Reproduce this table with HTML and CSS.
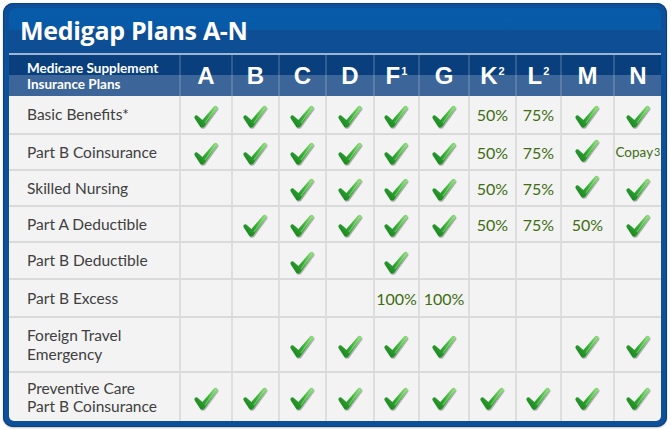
FILE: index.html
```html
<!DOCTYPE html>
<html lang="en">
<head>
<meta charset="utf-8">
<title>Medigap Plans A-N</title>
<link rel="stylesheet" href="styles.css">
</head>
<body>
<svg width="0" height="0" class="defs" aria-hidden="true">
  <defs>
    <linearGradient id="g" gradientUnits="userSpaceOnUse" x1="5" y1="21" x2="22" y2="3">
      <stop offset="0" stop-color="#1a8520"/>
      <stop offset="0.45" stop-color="#34aa36"/>
      <stop offset="1" stop-color="#84d874"/>
    </linearGradient>
    <filter id="sh" x="-20%" y="-20%" width="150%" height="150%">
      <feDropShadow dx="0.8" dy="1.2" stdDeviation="0.7" flood-color="#000" flood-opacity="0.35"/>
    </filter>
    <symbol id="chk" viewBox="0 0 26 24">
      <path filter="url(#sh)" fill="url(#g)" d="M1.6,13.6 C0.6,12.1 2.6,10.1 4.1,11.1 L9,15.4 L20.4,2.1 C21.5,0.8 24.6,2 23.5,4 L11.1,21.5 C10,23 8,23 7,21.8 Z"/>
      <path fill="#b6f0a6" opacity="0.5" d="M11,18 L21.3,3.6 C21.8,3 22.6,3.3 22.3,4 L12,18.6 Z"/>
    </symbol>
  </defs>
</svg>

<div class="frame">
  <div class="title">Medigap Plans A-N</div>
  <div class="line"></div>
  <div class="row head">
    <div class="hl"><span>Medicare Supplement</span><span>Insurance Plans</span></div>
    <div class="hc">A</div>
    <div class="hc">B</div>
    <div class="hc">C</div>
    <div class="hc">D</div>
    <div class="hc">F<sup>1</sup></div>
    <div class="hc">G</div>
    <div class="hc">K<sup>2</sup></div>
    <div class="hc">L<sup>2</sup></div>
    <div class="hc">M</div>
    <div class="hc">N</div>
  </div>
  <div class="body">
    <div class="row r1">
      <div class="lbl">Basic Benefits*</div>
      <div class="c"><svg class="ck"><use href="#chk"/></svg></div>
      <div class="c"><svg class="ck"><use href="#chk"/></svg></div>
      <div class="c"><svg class="ck"><use href="#chk"/></svg></div>
      <div class="c"><svg class="ck"><use href="#chk"/></svg></div>
      <div class="c"><svg class="ck"><use href="#chk"/></svg></div>
      <div class="c"><svg class="ck"><use href="#chk"/></svg></div>
      <div class="c pct">50%</div>
      <div class="c pct">75%</div>
      <div class="c"><svg class="ck"><use href="#chk"/></svg></div>
      <div class="c"><svg class="ck"><use href="#chk"/></svg></div>
    </div>
    <div class="row r2">
      <div class="lbl">Part B Coinsurance</div>
      <div class="c"><svg class="ck"><use href="#chk"/></svg></div>
      <div class="c"><svg class="ck"><use href="#chk"/></svg></div>
      <div class="c"><svg class="ck"><use href="#chk"/></svg></div>
      <div class="c"><svg class="ck"><use href="#chk"/></svg></div>
      <div class="c"><svg class="ck"><use href="#chk"/></svg></div>
      <div class="c"><svg class="ck"><use href="#chk"/></svg></div>
      <div class="c pct">50%</div>
      <div class="c pct">75%</div>
      <div class="c"><svg class="ck up"><use href="#chk"/></svg></div>
      <div class="c copay">Copay<sup>3</sup></div>
    </div>
    <div class="row r3">
      <div class="lbl">Skilled Nursing</div>
      <div class="c"></div>
      <div class="c"></div>
      <div class="c"><svg class="ck"><use href="#chk"/></svg></div>
      <div class="c"><svg class="ck"><use href="#chk"/></svg></div>
      <div class="c"><svg class="ck"><use href="#chk"/></svg></div>
      <div class="c"><svg class="ck"><use href="#chk"/></svg></div>
      <div class="c pct">50%</div>
      <div class="c pct">75%</div>
      <div class="c"><svg class="ck up"><use href="#chk"/></svg></div>
      <div class="c"><svg class="ck"><use href="#chk"/></svg></div>
    </div>
    <div class="row r4">
      <div class="lbl">Part A Deductible</div>
      <div class="c"></div>
      <div class="c"><svg class="ck"><use href="#chk"/></svg></div>
      <div class="c"><svg class="ck"><use href="#chk"/></svg></div>
      <div class="c"><svg class="ck"><use href="#chk"/></svg></div>
      <div class="c"><svg class="ck"><use href="#chk"/></svg></div>
      <div class="c"><svg class="ck"><use href="#chk"/></svg></div>
      <div class="c pct">50%</div>
      <div class="c pct">75%</div>
      <div class="c pct">50%</div>
      <div class="c"><svg class="ck"><use href="#chk"/></svg></div>
    </div>
    <div class="row r5">
      <div class="lbl">Part B Deductible</div>
      <div class="c"></div>
      <div class="c"></div>
      <div class="c"><svg class="ck"><use href="#chk"/></svg></div>
      <div class="c"></div>
      <div class="c"><svg class="ck"><use href="#chk"/></svg></div>
      <div class="c"></div>
      <div class="c"></div>
      <div class="c"></div>
      <div class="c"></div>
      <div class="c"></div>
    </div>
    <div class="row r6">
      <div class="lbl">Part B Excess</div>
      <div class="c"></div>
      <div class="c"></div>
      <div class="c"></div>
      <div class="c"></div>
      <div class="c pct">100%</div>
      <div class="c pct">100%</div>
      <div class="c"></div>
      <div class="c"></div>
      <div class="c"></div>
      <div class="c"></div>
    </div>
    <div class="row r7">
      <div class="lbl"><span>Foreign Travel</span><span>Emergency</span></div>
      <div class="c"></div>
      <div class="c"></div>
      <div class="c"><svg class="ck"><use href="#chk"/></svg></div>
      <div class="c"><svg class="ck"><use href="#chk"/></svg></div>
      <div class="c"><svg class="ck"><use href="#chk"/></svg></div>
      <div class="c"><svg class="ck"><use href="#chk"/></svg></div>
      <div class="c"></div>
      <div class="c"></div>
      <div class="c"><svg class="ck"><use href="#chk"/></svg></div>
      <div class="c"><svg class="ck"><use href="#chk"/></svg></div>
    </div>
    <div class="row r8">
      <div class="lbl"><span>Preventive Care</span><span>Part B Coinsurance</span></div>
      <div class="c"><svg class="ck"><use href="#chk"/></svg></div>
      <div class="c"><svg class="ck"><use href="#chk"/></svg></div>
      <div class="c"><svg class="ck"><use href="#chk"/></svg></div>
      <div class="c"><svg class="ck"><use href="#chk"/></svg></div>
      <div class="c"><svg class="ck"><use href="#chk"/></svg></div>
      <div class="c"><svg class="ck"><use href="#chk"/></svg></div>
      <div class="c"><svg class="ck"><use href="#chk"/></svg></div>
      <div class="c"><svg class="ck"><use href="#chk"/></svg></div>
      <div class="c"><svg class="ck"><use href="#chk"/></svg></div>
      <div class="c"><svg class="ck"><use href="#chk"/></svg></div>
    </div>
  </div>
</div>
</body>
</html>
```
FILE: styles.css
```css
html, body {
  margin: 0;
  padding: 0;
  background: #ffffff;
}
body {
  padding: 3px;
}
.defs {
  position: absolute;
  width: 0;
  height: 0;
}
.frame {
  width: 664px;
  height: 424px;
  box-sizing: border-box;
  padding: 5px 6px 6px 6px;
  border-radius: 10px;
  background: #0d4f98;
  box-shadow: inset 0 0 0 1px #0a407f, 0 1px 2px rgba(0, 0, 0, 0.25);
  display: flex;
  flex-direction: column;
}
.title {
  height: 45px;
  box-sizing: border-box;
  padding: 7px 0 0 11px;
  border-radius: 7px 7px 0 0;
  background: linear-gradient(#075ba8 0, #085aa7 49%, #0e4e94 50%, #0e4e94 100%);
  color: #ffffff;
  font-family: "Open Sans", "Liberation Sans", sans-serif;
  font-weight: 700;
  font-size: 25px;
  line-height: 30px;
  letter-spacing: -0.3px;
}
.line {
  height: 2px;
  background: #9fb4cf;
}
.row {
  display: grid;
  grid-template-columns: 170px 52px 47px 47px 48px 45px 50px 47px 45px 53px 48px;
}
.head {
  height: 41px;
  background: linear-gradient(#0a3f7e 0, #0a3f7e 50%, #3c6599 50%, #3c6599 100%);
}
.hl {
  color: #ffffff;
  font-family: "Lato", "Liberation Sans", sans-serif;
  font-weight: 700;
  font-size: 13.5px;
  line-height: 16px;
  padding-left: 18px;
  display: flex;
  flex-direction: column;
  justify-content: center;
  gap: 0;
}
.hc {
  border-left: 2px solid rgba(255, 255, 255, 0.16);
  color: #ffffff;
  font-family: "Liberation Sans", Arial, sans-serif;
  font-weight: 700;
  font-size: 24px;
  display: flex;
  align-items: center;
  justify-content: center;
}
.hc sup {
  font-size: 11px;
  align-self: flex-start;
  margin-top: 10px;
  margin-left: 1px;
}
.body {
  flex: 1;
  background: #f3f3f3;
  border-radius: 0 0 5px 5px;
  overflow: hidden;
}
.body .row + .row {
  border-top: 2px solid #dadada;
}
.body .row {
  box-sizing: border-box;
}
.r1 { height: 37px; }
.r2 { height: 36px; }
.r3 { height: 36px; }
.r4 { height: 36px; }
.r5 { height: 37px; }
.r6 { height: 38px; }
.r7 { height: 55px; }
.r8 { height: 50px; }
.lbl {
  color: #404040;
  font-family: "Lato", "Liberation Sans", sans-serif;
  font-size: 15.5px;
  line-height: 18.5px;
  padding-left: 18px;
  display: flex;
  flex-direction: column;
  justify-content: center;
}
.c {
  border-left: 2px solid #dedede;
  display: flex;
  align-items: center;
  justify-content: center;
}
.ck {
  width: 27px;
  height: 25px;
  margin-top: 3px;
}
.ck.up {
  margin-top: -3px;
}
.pct {
  color: #3e6d12;
  font-family: "Lato", "Liberation Sans", sans-serif;
  font-size: 16px;
}
.copay {
  color: #3e6d12;
  font-family: "Lato", "Liberation Sans", sans-serif;
  font-size: 13.5px;
}
.copay sup {
  font-size: 11px;
  vertical-align: 5px;
  line-height: 0;
  margin-left: 1px;
}
```
